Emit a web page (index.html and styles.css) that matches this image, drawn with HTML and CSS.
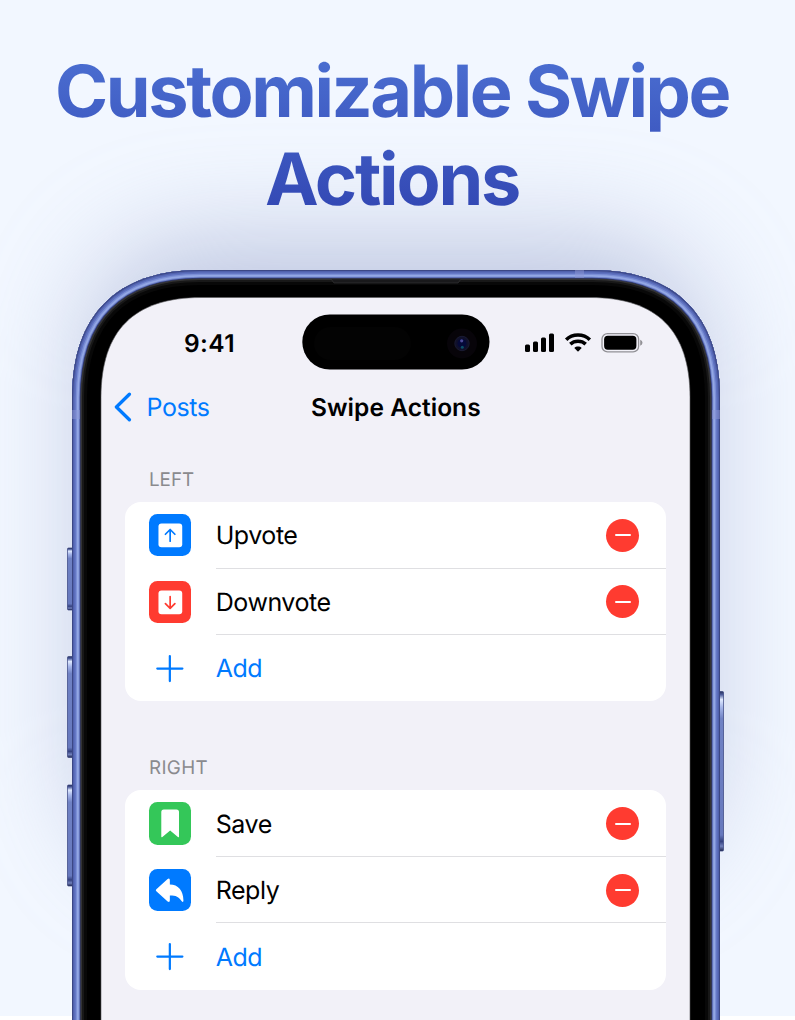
FILE: index.html
```html
<!DOCTYPE html>
<html lang="en">
<head>
<meta charset="utf-8">
<title>Customizable Swipe Actions</title>
<link rel="stylesheet" href="styles.css">
</head>
<body>
<main class="poster">
  <h1 class="headline"><span class="line line-one">Customizable Swipe</span><span class="line line-two">Actions</span></h1>
  <section class="phone">
    <div class="glow"></div>
    <svg class="frame" width="664" height="760" viewBox="0 0 664 760">
      <defs>
        <linearGradient id="button" x2="0" y2="1">
          <stop offset="0" stop-color="#27305c"/><stop offset=".02" stop-color="#4d5c9c"/><stop offset=".05" stop-color="#e0eaff"/><stop offset=".1" stop-color="#a4b4e8"/><stop offset=".17" stop-color="#7082c4"/><stop offset=".9" stop-color="#6678bd"/><stop offset=".94" stop-color="#34417f"/><stop offset=".97" stop-color="#7180bb"/><stop offset="1" stop-color="#202850"/>
        </linearGradient>
        <path id="body" d="M8 800V128C8 45 53 0 136 0H528C611 0 656 45 656 128V800Z"/>
        <clipPath id="inside"><use href="#body"/></clipPath>
      </defs>
      <g fill="url(#button)" stroke="#35417d" stroke-width=".7">
        <rect x="3.5" y="278" width="6" height="62" rx="1"/>
        <rect x="3.5" y="386.500" width="6" height="101" rx="1"/>
        <rect x="3.500" y="515" width="6" height="101" rx="1"/>
        <rect x="654" y="421.500" width="5.500" height="159.500" rx="1"/>
      </g>
      <g clip-path="url(#inside)" fill="none">
        <use href="#body" fill="#000"/>
        <use href="#body" stroke="#080808" stroke-width="30"/>
        <use href="#body" stroke="#181818" stroke-width="24"/>
        <use href="#body" stroke="#333334" stroke-width="20"/>
        <use href="#body" stroke="#303b78" stroke-width="17"/>
        <use href="#body" stroke="#6f82ca" stroke-width="15.500"/>
        <use href="#body" stroke="#93a7e4" stroke-width="13.500"/>
        <use href="#body" stroke="#7b8fd6" stroke-width="10"/>
        <use href="#body" stroke="#5f72c0" stroke-width="7.500"/>
        <use href="#body" stroke="#5061ad" stroke-width="4.500"/>
        <use href="#body" stroke="#3c4785" stroke-width="2"/>
        <path d="M511 0h9v8h-9zM8 140h8v9H8zM648 140h8v9h-8z" fill="#8b95d3" opacity=".5"/>
        <path d="M267 9h130l-3 4H270Z" fill="#19191b" stroke="#3b3b3d" stroke-width=".6"/>
      </g>
      <path d="M37 800V127.500C37 60.500 70 27.500 137 27.500H526C593 27.500 626 60.500 626 127.500V800Z" fill="#f2f1f8" stroke="#59595c" stroke-width=".6"/>
    </svg>
    <div class="screen">
      <header class="status">
        <span class="time">9:41</span>
        <svg class="island" width="188" height="56" viewBox="0 0 188 56">
          <rect x=".3" y=".5" width="187.200" height="55" rx="27.500"/>
          <rect x="12" y="13" width="97" height="33" rx="16.500" fill="#030303"/>
          <circle cx="160" cy="29.500" r="15" fill="#070409"/>
          <circle cx="160" cy="29.500" r="7.200" fill="#10102b" stroke="#1a1b32"/>
          <circle cx="160" cy="29.500" r="4.500" fill="#050938"/>
          <circle cx="159.700" cy="26.800" r="1.600" fill="#4d4b99"/>
          <circle cx="160.300" cy="33.300" r="1.500" fill="#0b5067"/>
        </svg>
        <svg class="signals" width="120" height="22" viewBox="0 0 120 22">
          <rect x="1" y="12.500" width="5" height="7.500" rx="1.500"/><rect x="9" y="9.500" width="5" height="10.500" rx="1.500"/><rect x="17" y="5.500" width="5" height="14.500" rx="1.500"/><rect x="25" y="1.500" width="5" height="18.500" rx="1.500"/>
          <g fill="none" stroke="#000" stroke-width="3.500"><path d="M42.200 7.700C48.500 1.400 59.500 1.400 65.800 7.700"/><path d="M46.300 12.100C50.500 8.200 57.500 8.200 61.700 12.100"/></g>
          <path d="M50.300 15.900C52.300 14.100 55.700 14.100 57.700 15.900L54.500 19.300Q54 19.800 53.500 19.300Z"/>
          <rect x="78" y="1.600" width="36.600" height="18.300" rx="5.500" fill="none" stroke="#929196" stroke-width="1.300"/>
          <rect x="80.100" y="3.700" width="32.300" height="14.100" rx="3.700"/>
          <path d="M116.200 7.700Q118.500 8.500 118.500 10.700T116.200 13.700Z" fill="#929196"/>
        </svg>
      </header>
      <nav class="navbar">
        <a class="back"><svg width="20" height="30" viewBox="0 0 20 30"><path d="M16.400 2.200 3.400 15 16.400 27.800" fill="none" stroke="currentColor" stroke-width="3.300" stroke-linecap="round" stroke-linejoin="round"/></svg><span class="posts">Posts</span></a>
        <span class="nav-title">Swipe Actions</span>
      </nav>
      <section class="group">
        <h2 class="label">LEFT</h2>
        <div class="card">
          <div class="row">
            <svg class="icon up" viewBox="0 0 42 42"><rect x="9.400" y="9.500" width="23.600" height="23.600" rx="3" fill="#fff"/><path d="M21 27V15.500M16.300 20.100 21 15.400l4.700 4.700" fill="none" stroke="currentColor" stroke-width="1.700" stroke-linecap="round" stroke-linejoin="round"/></svg>
            <span class="name upvote">Upvote</span><i class="remove"></i>
          </div>
          <div class="row">
            <svg class="icon down" viewBox="0 0 42 42"><rect x="9.400" y="9.500" width="23.600" height="23.600" rx="3" fill="#fff"/><path d="M21 15.400V27M16.300 22.400 21 27.100l4.700-4.700" fill="none" stroke="currentColor" stroke-width="1.700" stroke-linecap="round" stroke-linejoin="round"/></svg>
            <span class="name downvote">Downvote</span><i class="remove"></i>
          </div>
          <div class="row add">
            <svg class="plus" viewBox="0 0 42 42"><path d="M20.600 8.900V33.700M8.200 21.300H33" stroke="currentColor" stroke-width="2.200" stroke-linecap="round"/></svg><span class="name">Add</span>
          </div>
        </div>
      </section>
      <section class="group">
        <h2 class="label label-right">RIGHT</h2>
        <div class="card">
          <div class="row">
            <svg class="icon save" viewBox="0 0 42 42"><path d="M12.200 10Q12.200 7.500 14.700 7.500H27.300Q29.800 7.500 29.800 10V34.300Q29.800 35.700 28.700 34.700L21 28.300 13.300 34.700Q12.200 35.700 12.200 34.300Z" fill="#fff"/></svg>
            <span class="name">Save</span><i class="remove"></i>
          </div>
          <div class="row">
            <svg class="icon reply" viewBox="0 0 42 42"><path d="M7.300 20.100 18.500 9.900Q20.700 8.500 20.700 11.200V15.400C29 15.400 34 21.200 34.200 31.200Q34.200 33.600 32.500 32.100C29.400 27.300 27 26.200 20.700 26.200V31Q20.700 33.700 18.500 32.300L7.300 22.100Q6.200 21.100 7.300 20.100Z" fill="#fff"/></svg>
            <span class="name">Reply</span><i class="remove"></i>
          </div>
          <div class="row add">
            <svg class="plus" viewBox="0 0 42 42"><path d="M20.600 8.900V33.700M8.200 21.300H33" stroke="currentColor" stroke-width="2.200" stroke-linecap="round"/></svg><span class="name">Add</span>
          </div>
        </div>
      </section>
    </div>
  </section>
</main>
</body>
</html>
```
FILE: styles.css
```css
* { box-sizing: border-box; }
body { margin: 0; background: #fff; font-family: Inter, "Open Sans", sans-serif; text-rendering: geometricPrecision; }
.poster {
  height: 1020px;
  overflow: hidden;
  display: flex;
  flex-direction: column;
  background: linear-gradient(#f2f7ff, #f2f7ff) top / 100% 1016px no-repeat;
}
.headline {
  position: relative;
  z-index: 2;
  flex: none;
  height: 270px;
  margin: 0;
  padding: 48px 11px 0 0;
  text-align: center;
  font-size: 72px;
  font-weight: 700;
  line-height: 87.600px;
  color: transparent;
  background: linear-gradient(#4a6dd0 60px, #3348b4 210px);
  -webkit-background-clip: text;
  background-clip: text;
}
.line { display: block; white-space: nowrap; }
.line-one { letter-spacing: -2.420px; }
.line-two { letter-spacing: -2.200px; }
.phone { position: relative; width: 664px; height: 750px; margin-left: 64px; flex: none; }
.glow {
  position: absolute;
  left: 24px;
  top: -28px;
  width: 616px;
  height: 630px;
  border-radius: 110px;
  background: rgba(132, 145, 190, .48);
  filter: blur(52px);
}
.frame { position: absolute; left: 0; top: 0; }
.screen { position: relative; margin-left: 37px; width: 589px; padding-top: 43px; }
.status { display: flex; height: 59px; align-items: center; }
.time { width: 201px; padding: 1px 0 0 83px; font-size: 24.500px; font-weight: 600; line-height: 30px; letter-spacing: .4px; }
.island { flex: none; margin-top: -1px; }
.signals { margin-left: 34px; flex: none; }
.navbar { display: grid; grid-template-columns: 209px 1fr; align-items: center; height: 70px; padding-left: 12px; font-size: 25px; line-height: 30px; }
.back { display: flex; align-items: center; gap: 13.500px; color: #007aff; }
.posts { letter-spacing: -.4px; padding-top: 2px; }
.nav-title { margin-left: -11px; font-weight: 600; font-size: 24.500px; white-space: nowrap; letter-spacing: .05px; }
.group { padding: 24px 24px 0; height: 288.300px; }
.label { margin: 0; padding-left: 24px; height: 36px; font-size: 18.800px; line-height: 28px; font-weight: 400; color: #8a8a8e; }
.label-right { letter-spacing: .35px; }
.card { height: 199.300px; border-radius: 16px; background: #fff; padding-left: 24px; }
.row { position: relative; display: grid; grid-template-columns: 67px 1fr 60px; align-items: center; height: 66.500px; }
.row:not(.add)::after { content: ""; position: absolute; left: 67px; right: 0; bottom: 0; height: 1px; background: #dfdfe2; }
.icon { width: 42.300px; height: 42.300px; border-radius: 8.500px; }
.up { background: #007aff; color: #007aff; }
.down { background: #ff3b30; color: #ff3b30; }
.save { background: #34c759; }
.reply { background: #007aff; }
.plus { width: 42.500px; height: 42.500px; }
.name { font-size: 25px; line-height: 32px; color: #000; letter-spacing: -.450px; padding-top: 2px; margin-left: -.3px; }
.add, .add .name { color: #007aff; }
.remove { display: flex; align-items: center; justify-content: center; width: 33px; height: 33px; border-radius: 50%; background: #ff3b30; }
.remove::before { content: ""; width: 16px; height: 2px; border-radius: 1px; background: #fff; }
```
